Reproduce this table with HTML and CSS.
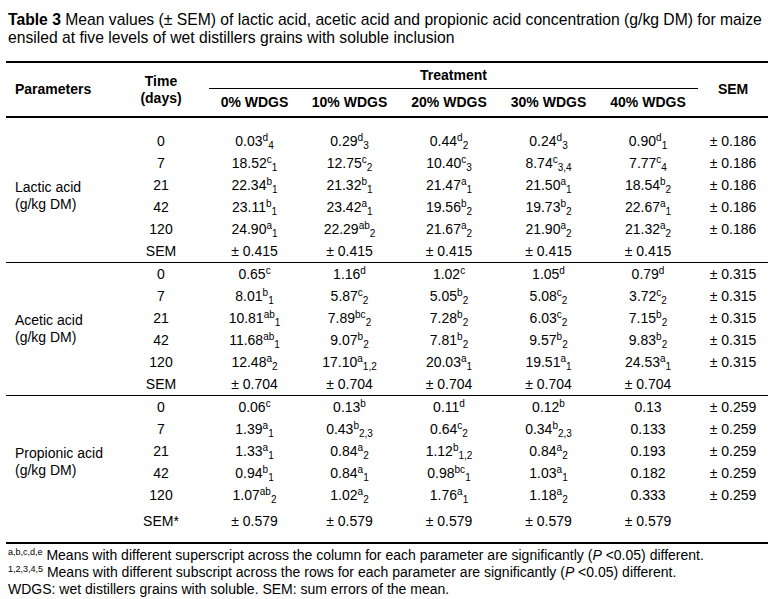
FILE: index.html
```html
<!DOCTYPE html>
<html>
<head>
<meta charset="utf-8">
<link rel="stylesheet" href="styles.css">
</head>
<body>
<div class="page">
  <p class="title"><b>Table 3</b> Mean values (± SEM) of lactic acid, acetic acid and propionic acid concentration (g/kg DM) for maize<br>ensiled at five levels of wet distillers grains with soluble inclusion</p>
  <table class="data">
    <colgroup>
      <col class="c-par"><col class="c-time"><col class="c-0"><col class="c-10"><col class="c-20"><col class="c-30"><col class="c-40"><col class="c-sem">
    </colgroup>
    <thead>
      <tr class="h1">
        <th rowspan="2" class="par">Parameters</th>
        <th rowspan="2" class="time">Time<br>(days)</th>
        <th colspan="5" class="treat">Treatment</th>
        <th rowspan="2" class="sem">SEM</th>
      </tr>
      <tr class="h2">
        <th>0% WDGS</th><th>10% WDGS</th><th>20% WDGS</th><th>30% WDGS</th><th>40% WDGS</th>
      </tr>
    </thead>
    <tbody>
      <tr class="gap"><td colspan="8"></td></tr>
      <tr>
        <td rowspan="6" class="label">Lactic acid<br>(g/kg DM)</td>
        <td>0</td>
        <td>0.03<sup>d</sup><sub>4</sub></td><td>0.29<sup>d</sup><sub>3</sub></td><td>0.44<sup>d</sup><sub>2</sub></td><td>0.24<sup>d</sup><sub>3</sub></td><td>0.90<sup>d</sup><sub>1</sub></td><td>± 0.186</td>
      </tr>
      <tr><td>7</td><td>18.52<sup>c</sup><sub>1</sub></td><td>12.75<sup>c</sup><sub>2</sub></td><td>10.40<sup>c</sup><sub>3</sub></td><td>8.74<sup>c</sup><sub>3,4</sub></td><td>7.77<sup>c</sup><sub>4</sub></td><td>± 0.186</td></tr>
      <tr><td>21</td><td>22.34<sup>b</sup><sub>1</sub></td><td>21.32<sup>b</sup><sub>1</sub></td><td>21.47<sup>a</sup><sub>1</sub></td><td>21.50<sup>a</sup><sub>1</sub></td><td>18.54<sup>b</sup><sub>2</sub></td><td>± 0.186</td></tr>
      <tr><td>42</td><td>23.11<sup>b</sup><sub>1</sub></td><td>23.42<sup>a</sup><sub>1</sub></td><td>19.56<sup>b</sup><sub>2</sub></td><td>19.73<sup>b</sup><sub>2</sub></td><td>22.67<sup>a</sup><sub>1</sub></td><td>± 0.186</td></tr>
      <tr><td>120</td><td>24.90<sup>a</sup><sub>1</sub></td><td>22.29<sup>ab</sup><sub>2</sub></td><td>21.67<sup>a</sup><sub>2</sub></td><td>21.90<sup>a</sup><sub>2</sub></td><td>21.32<sup>a</sup><sub>2</sub></td><td>± 0.186</td></tr>
      <tr><td>SEM</td><td>± 0.415</td><td>± 0.415</td><td>± 0.415</td><td>± 0.415</td><td>± 0.415</td><td></td></tr>

      <tr class="first">
        <td rowspan="6" class="label">Acetic acid<br>(g/kg DM)</td>
        <td>0</td>
        <td>0.65<sup>c</sup></td><td>1.16<sup>d</sup></td><td>1.02<sup>c</sup></td><td>1.05<sup>d</sup></td><td>0.79<sup>d</sup></td><td>± 0.315</td>
      </tr>
      <tr><td>7</td><td>8.01<sup>b</sup><sub>1</sub></td><td>5.87<sup>c</sup><sub>2</sub></td><td>5.05<sup>b</sup><sub>2</sub></td><td>5.08<sup>c</sup><sub>2</sub></td><td>3.72<sup>c</sup><sub>2</sub></td><td>± 0.315</td></tr>
      <tr><td>21</td><td>10.81<sup>ab</sup><sub>1</sub></td><td>7.89<sup>bc</sup><sub>2</sub></td><td>7.28<sup>b</sup><sub>2</sub></td><td>6.03<sup>c</sup><sub>2</sub></td><td>7.15<sup>b</sup><sub>2</sub></td><td>± 0.315</td></tr>
      <tr><td>42</td><td>11.68<sup>ab</sup><sub>1</sub></td><td>9.07<sup>b</sup><sub>2</sub></td><td>7.81<sup>b</sup><sub>2</sub></td><td>9.57<sup>b</sup><sub>2</sub></td><td>9.83<sup>b</sup><sub>2</sub></td><td>± 0.315</td></tr>
      <tr><td>120</td><td>12.48<sup>a</sup><sub>2</sub></td><td>17.10<sup>a</sup><sub>1,2</sub></td><td>20.03<sup>a</sup><sub>1</sub></td><td>19.51<sup>a</sup><sub>1</sub></td><td>24.53<sup>a</sup><sub>1</sub></td><td>± 0.315</td></tr>
      <tr><td>SEM</td><td>± 0.704</td><td>± 0.704</td><td>± 0.704</td><td>± 0.704</td><td>± 0.704</td><td></td></tr>

      <tr class="first">
        <td rowspan="6" class="label lab-prop">Propionic acid<br>(g/kg DM)</td>
        <td>0</td>
        <td>0.06<sup>c</sup></td><td>0.13<sup>b</sup></td><td>0.11<sup>d</sup></td><td>0.12<sup>b</sup></td><td>0.13</td><td>± 0.259</td>
      </tr>
      <tr><td>7</td><td>1.39<sup>a</sup><sub>1</sub></td><td>0.43<sup>b</sup><sub>2,3</sub></td><td>0.64<sup>c</sup><sub>2</sub></td><td>0.34<sup>b</sup><sub>2,3</sub></td><td>0.133</td><td>± 0.259</td></tr>
      <tr><td>21</td><td>1.33<sup>a</sup><sub>1</sub></td><td>0.84<sup>a</sup><sub>2</sub></td><td>1.12<sup>b</sup><sub>1,2</sub></td><td>0.84<sup>a</sup><sub>2</sub></td><td>0.193</td><td>± 0.259</td></tr>
      <tr><td>42</td><td>0.94<sup>b</sup><sub>1</sub></td><td>0.84<sup>a</sup><sub>1</sub></td><td>0.98<sup>bc</sup><sub>1</sub></td><td>1.03<sup>a</sup><sub>1</sub></td><td>0.182</td><td>± 0.259</td></tr>
      <tr><td>120</td><td>1.07<sup>ab</sup><sub>2</sub></td><td>1.02<sup>a</sup><sub>2</sub></td><td>1.76<sup>a</sup><sub>1</sub></td><td>1.18<sup>a</sup><sub>2</sub></td><td>0.333</td><td>± 0.259</td></tr>
      <tr class="semstar"><td>SEM*</td><td>± 0.579</td><td>± 0.579</td><td>± 0.579</td><td>± 0.579</td><td>± 0.579</td><td></td></tr>
      <tr class="tail"><td colspan="8"></td></tr>
    </tbody>
  </table>
  <div class="notes">
    <p><sup>a,b,c,d,e</sup> Means with different superscript across the column for each parameter are significantly (<i>P</i> &lt;0.05) different.</p>
    <p><sup>1,2,3,4,5</sup> Means with different subscript across the rows for each parameter are significantly (<i>P</i> &lt;0.05) different.</p>
    <p>WDGS: wet distillers grains with soluble. SEM: sum errors of the mean.</p>
  </div>
</div>
</body>
</html>
```

FILE: styles.css
```css
html, body {
  margin: 0;
  padding: 0;
  background: #fff;
  color: #000;
  font-family: "Liberation Sans", Arial, sans-serif;
}

.page {
  padding: 11px 0 0 6px;
}

.title {
  margin: 0 0 14px 2px;
  font-size: 15.7px;
  line-height: 18px;
  white-space: nowrap;
}

.data {
  width: 762px;
  table-layout: fixed;
  border-collapse: separate;
  border-spacing: 0;
  font-size: 14px;
}

.c-par { width: 107px; }
.c-time { width: 96px; }
.c-0 { width: 91px; }
.c-10 { width: 99px; }
.c-20 { width: 100px; }
.c-30 { width: 99px; }
.c-40 { width: 100px; }
.c-sem { width: 70px; }

.data th {
  font-weight: bold;
  padding: 0;
  text-align: center;
  vertical-align: middle;
}

.h1 th {
  border-top: 2px solid #000;
  line-height: 17px;
}

.h1 th.par,
.h1 th.time,
.h1 th.sem {
  border-bottom: 2px solid #000;
}

.h1 th.par {
  text-align: left;
  padding-left: 9px;
}

.h1 th.treat {
  line-height: 25px;
  border-bottom: 1px solid #000;
}

.h2 th {
  line-height: 27px;
  border-bottom: 2px solid #000;
}

.data td {
  padding: 0;
  line-height: 22px;
  text-align: center;
  vertical-align: middle;
  white-space: nowrap;
}

.data td.label {
  text-align: left;
  padding-left: 9px;
  line-height: 17px;
}

.data td.lab-prop {
  padding-bottom: 4px;
}

.gap td {
  height: 12px;
  line-height: 0;
}

.first td {
  border-top: 1px solid #000;
}

.semstar td {
  padding-top: 4px;
}

.tail td {
  height: 10px;
  line-height: 0;
  border-bottom: 2px solid #000;
}

.data sup,
.data sub {
  font-size: 10px;
  line-height: 0;
}

.data sup {
  vertical-align: 5px;
}

.data sub {
  vertical-align: -3px;
}

.notes {
  margin-top: 3px;
  font-size: 14px;
  line-height: 17px;
}

.notes p {
  margin: 0;
  padding-left: 2px;
}

.notes sup {
  font-size: 9px;
  line-height: 0;
  vertical-align: 5px;
}
```
